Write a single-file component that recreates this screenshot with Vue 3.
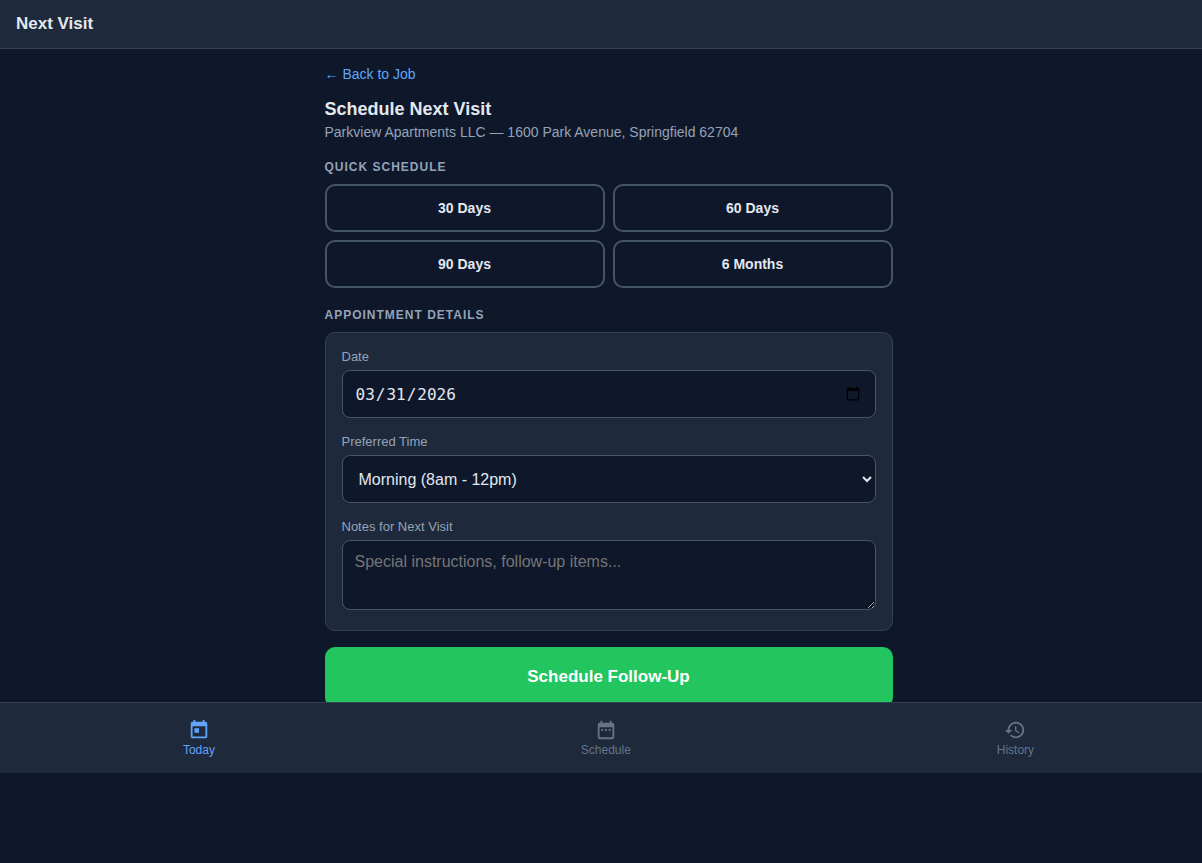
<script setup>
import { ref } from 'vue'

const quickOptions = ['30 Days', '60 Days', '90 Days', '6 Months']
const date = ref('2026-03-31')
const time = ref('morning')
const notes = ref('')

const tabs = [
  {
    label: 'Today',
    active: true,
    path: 'M19 3h-1V1h-2v2H8V1H6v2H5c-1.11 0-1.99.9-1.99 2L3 19c0 1.1.89 2 2 2h14c1.1 0 2-.9 2-2V5c0-1.1-.9-2-2-2zm0 16H5V8h14v11zM7 10h5v5H7z',
  },
  {
    label: 'Schedule',
    active: false,
    path: 'M9 11H7v2h2v-2zm4 0h-2v2h2v-2zm4 0h-2v2h2v-2zm2-7h-1V2h-2v2H8V2H6v2H5c-1.11 0-1.99.9-1.99 2L3 20c0 1.1.89 2 2 2h14c1.1 0 2-.9 2-2V6c0-1.1-.9-2-2-2zm0 16H5V9h14v11z',
  },
  {
    label: 'History',
    active: false,
    path: 'M13 3c-4.97 0-9 4.03-9 9H1l3.89 3.89.07.14L9 12H6c0-3.87 3.13-7 7-7s7 3.13 7 7-3.13 7-7 7c-1.93 0-3.68-.79-4.94-2.06l-1.42 1.42C8.27 19.99 10.51 21 13 21c4.97 0 9-4.03 9-9s-4.03-9-9-9zm-1 5v5l4.28 2.54.72-1.21-3.5-2.08V8H12z',
  },
]
</script>

<template>
  <div class="shell">
    <header class="topbar">
      <h1>Next Visit</h1>
    </header>

    <main class="scroller">
      <div class="content">
        <a class="back" href="#job">← Back to Job</a>
        <h2 class="title">Schedule Next Visit</h2>
        <p class="subtitle">Parkview Apartments LLC — 1600 Park Avenue, Springfield 62704</p>

        <h3 class="section">Quick Schedule</h3>
        <div class="quick">
          <button v-for="option in quickOptions" :key="option" type="button">{{ option }}</button>
        </div>

        <h3 class="section">Appointment Details</h3>
        <form @submit.prevent>
          <div class="card">
            <div class="field">
              <label for="date">Date</label>
              <input id="date" v-model="date" class="control date" type="date" />
            </div>
            <div class="field">
              <label for="time">Preferred Time</label>
              <select id="time" v-model="time" class="control">
                <option value="morning">Morning (8am - 12pm)</option>
              </select>
            </div>
            <div class="field">
              <label for="notes">Notes for Next Visit</label>
              <textarea
                id="notes"
                v-model="notes"
                class="control notes"
                placeholder="Special instructions, follow-up items..."
              ></textarea>
            </div>
          </div>
          <button class="submit" type="submit">Schedule Follow-Up</button>
        </form>
      </div>
    </main>

    <nav class="tabs">
      <a v-for="tab in tabs" :key="tab.label" href="#" class="tab" :class="{ active: tab.active }">
        <svg viewBox="0 0 24 24" aria-hidden="true"><path :d="tab.path" /></svg>
        <span>{{ tab.label }}</span>
      </a>
    </nav>
  </div>
</template>

<style>
html,
body {
  background: #0f172a;
  overflow: hidden;
}
</style>

<style scoped>
* {
  box-sizing: border-box;
}

.shell {
  display: flex;
  flex-direction: column;
  height: calc(100vh - 90px);
  margin-right: -15px;
  color: #e2e8f0;
  font-family: "Liberation Sans", Arial, sans-serif;
}

.topbar {
  display: flex;
  align-items: center;
  flex: none;
  min-height: 49px;
  padding: 0 16px;
  background: #1e293b;
  border-bottom: 1px solid #334155;
}

h1,
h2,
h3,
p {
  margin: 0;
}

h1 {
  font-size: 17px;
  line-height: 20px;
}

.scroller {
  flex: 1;
  min-height: 0;
  overflow: hidden;
}

.content {
  max-width: 600px;
  margin: 0 auto;
  padding: 16px;
}

.back {
  display: block;
  width: fit-content;
  margin-bottom: 15px;
  color: #60a5fa;
  font-size: 14px;
  line-height: 18px;
  text-decoration: none;
}

.title {
  margin-bottom: 4px;
  font-size: 18px;
  line-height: 22px;
}

.subtitle {
  margin-bottom: 20px;
  color: #94a3b8;
  font-size: 14px;
  line-height: 16px;
}

.section {
  margin-bottom: 10px;
  color: #94a3b8;
  font-size: 12px;
  line-height: 14px;
  letter-spacing: 1px;
  text-transform: uppercase;
}

.quick {
  display: grid;
  grid-template-columns: 1fr 1fr;
  gap: 8px;
  margin-bottom: 20px;
}

.quick button {
  min-height: 48px;
  border: 2px solid #475569;
  border-radius: 10px;
  background: #0f172a;
  color: #e2e8f0;
  font: bold 14px "Liberation Sans", Arial, sans-serif;
}

.card {
  margin-bottom: 16px;
  padding: 16px;
  background: #1e293b;
  border: 1px solid #334155;
  border-radius: 10px;
}

.field + .field {
  margin-top: 16px;
}

.field label {
  display: block;
  margin-bottom: 6px;
  color: #94a3b8;
  font-size: 13px;
  line-height: 15px;
}

.control {
  display: block;
  width: 100%;
  min-height: 48px;
  padding: 12px;
  border: 1px solid #475569;
  border-radius: 8px;
  background: #0f172a;
  color: #e2e8f0;
  font: 16px "Liberation Sans", Arial, sans-serif;
}

.date {
  font-family: "DejaVu Sans Mono", monospace;
}

.notes {
  display: inline-block;
  min-height: 70px;
  resize: vertical;
}

.submit {
  width: 100%;
  min-height: 60px;
  border: 0;
  border-radius: 10px;
  background: #22c55e;
  color: #fff;
  font: bold 17px "Liberation Sans", Arial, sans-serif;
}

.tabs {
  display: flex;
  align-items: center;
  justify-content: space-around;
  flex: none;
  min-height: 71px;
  background: #1e293b;
  border-top: 1px solid #334155;
}

.tab {
  display: flex;
  flex-direction: column;
  align-items: center;
  gap: 2px;
  color: #64748b;
  font-size: 12px;
  line-height: 14px;
  text-decoration: none;
}

.tab.active {
  color: #60a5fa;
}

.tab svg {
  width: 22px;
  height: 22px;
  fill: currentColor;
}
</style>
